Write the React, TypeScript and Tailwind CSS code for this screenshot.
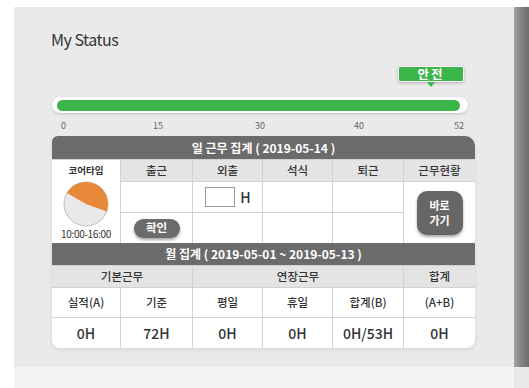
import React from "react";

const font = "font-['Noto_Sans_CJK_KR','Noto_Sans',sans-serif]";

const Head = ({ children }: { children: React.ReactNode }) => (
  <div className="col-span-6 flex items-center justify-center bg-[#6b6b6b] text-[12px] font-bold text-white">
    {children}
  </div>
);

const Th = ({ children, className = "" }: { children: React.ReactNode; className?: string }) => (
  <div className={`flex items-center justify-center bg-[#e4e4e4] text-[11.5px] font-medium text-[#333] ${className}`}>
    {children}
  </div>
);

const Td = ({ children, className = "" }: { children?: React.ReactNode; className?: string }) => (
  <div className={`flex items-center justify-center bg-white text-[#333] ${className}`}>{children}</div>
);

const Pie = () => (
  <svg width="46" height="46" viewBox="0 0 46 46">
    <circle cx="23" cy="23" r="22" fill="#e9e9e9" stroke="#bdbdbd" strokeWidth="1" />
    <path d="M23 23 L3.95 12 A22 22 0 0 1 43.67 30.52 Z" fill="#e8893a" />
  </svg>
);

export default function App() {
  return (
    <div className={`grid h-[388px] w-[529px] grid-cols-[14px_500px_15px] grid-rows-[7px_360px_21px] bg-white ${font}`}>
      <div />
      <div />
      <div />
      <div />
      <div className="flex flex-col bg-[#ebeaeb] pl-[38px] pt-[22px]">
        <h1 className="ml-[-1px] text-[16px] leading-[20px] tracking-[-0.5px] text-[#333]">My Status</h1>

        {/* badge */}
        <div className="mt-[17px] flex h-[22px] w-[412px] flex-col items-center pl-[346px]">
          <div className="flex h-[16px] w-[66px] items-center justify-center rounded-[2px] border border-white bg-[#3cb54a] text-[12.5px] font-bold leading-none tracking-[2px] text-white shadow-[0_1px_3px_rgba(0,0,0,0.25)]">
            안전
          </div>
          <div className="h-0 w-0 border-x-[4px] border-t-[5px] border-x-transparent border-t-[#3cb54a]" />
        </div>

        {/* bar */}
        <div className="mt-[9px] flex h-[16px] w-[416px] items-center rounded-full bg-white pl-[5px] pr-[8px] shadow-[0_1px_3px_rgba(0,0,0,0.2)]">
          <div className="h-[11px] w-full rounded-full bg-[#3bb54a]" />
        </div>

        {/* scale */}
        <div className="mt-[7px] flex h-[12px] text-[9px] leading-[12px] text-[#666]">
          <span className="ml-[9px]">0</span>
          <span className="ml-[87px]">15</span>
          <span className="ml-[92px]">30</span>
          <span className="ml-[89px]">40</span>
          <span className="ml-[90px]">52</span>
        </div>

        {/* table */}
        <div className="mt-[4px] w-[423px] overflow-hidden rounded-[8px] rounded-tl-[6px] rounded-tr-[10px] shadow-[0_2px_4px_rgba(0,0,0,0.08)]">
          <div className="grid grid-cols-[68px_71px_69px_69px_70px_71px] grid-rows-[23px_21px_30px_30px] gap-px bg-[#d2d2d2]">
            <Head>일 근무 집계 ( 2019-05-14 )</Head>
            <div className="row-span-3 flex flex-col items-center bg-white pt-[4px]">
              <span className="text-[9.5px] font-bold leading-[12px] text-[#333]">코어타임</span>
              <div className="mt-[5px]">
                <Pie />
              </div>
              <span className="mt-[1px] text-[10px] leading-[12px] tracking-[-0.3px] text-[#333]">10:00-16:00</span>
            </div>
            <Th>출근</Th>
            <Th>외출</Th>
            <Th>석식</Th>
            <Th>퇴근</Th>
            <Th>근무현황</Th>
            <Td />
            <Td className="gap-[5px] pl-[1px]">
              <div className="h-[20px] w-[30px] border border-[#999] bg-white" />
              <span className="text-[14px] font-medium">H</span>
            </Td>
            <Td />
            <Td />
            <Td className="row-span-2">
              <button className="flex h-[44px] w-[46px] flex-col items-center justify-center rounded-[10px] bg-[#666] text-[11px] font-bold leading-[15px] text-white shadow-[0_2px_3px_rgba(0,0,0,0.35)]">
                <span>바로</span>
                <span>가기</span>
              </button>
            </Td>
            <Td>
              <button className="flex h-[19px] w-[46px] items-center justify-center rounded-full bg-[#6b6b6b] text-[11.5px] font-bold text-white shadow-[0_2px_3px_rgba(0,0,0,0.35)]">
                확인
              </button>
            </Td>
            <Td />
            <Td />
            <Td />
          </div>
          <div className="grid grid-cols-[68px_71px_69px_69px_70px_71px] grid-rows-[22px_21px_29px_30px] gap-px bg-[#d2d2d2]">
            <Head>월 집계 ( 2019-05-01 ~ 2019-05-13 )</Head>
            <Th className="col-span-2">기본근무</Th>
            <Th className="col-span-3">연장근무</Th>
            <Th>합계</Th>
            <Td className="text-[11.5px] font-medium">실적(A)</Td>
            <Td className="text-[11.5px] font-medium">기준</Td>
            <Td className="text-[11.5px] font-medium">평일</Td>
            <Td className="text-[11.5px] font-medium">휴일</Td>
            <Td className="text-[11.5px] font-medium">합계(B)</Td>
            <Td className="text-[11.5px] font-medium">(A+B)</Td>
            <Td className="text-[14px] font-medium">0H</Td>
            <Td className="text-[14px] font-medium">72H</Td>
            <Td className="text-[14px] font-medium">0H</Td>
            <Td className="text-[14px] font-medium">0H</Td>
            <Td className="text-[14px] font-medium">0H/53H</Td>
            <Td className="text-[14px] font-medium">0H</Td>
          </div>
        </div>
      </div>
      <div className="bg-gradient-to-r from-[#a5a5a5] via-[#828282] to-[#6e6e6e]" />
      <div />
      <div className="bg-[#f4f4f4]" />
      <div className="bg-[#e9e9e9]" />
    </div>
  );
}
